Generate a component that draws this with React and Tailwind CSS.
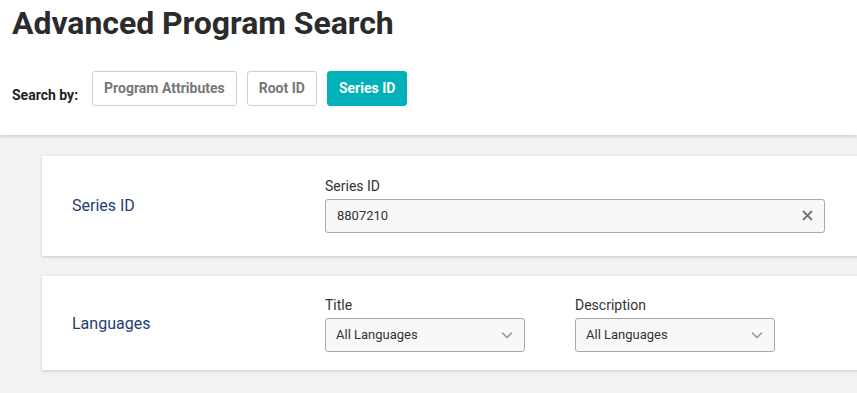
import { useState } from 'react';

const tabs = ['Program Attributes', 'Root ID', 'Series ID'];

function Chevron() {
  return (
    <svg width="14" height="14" viewBox="0 0 14 14" fill="none" stroke="#9a9a9a" strokeWidth="1.6">
      <path d="M2 4.5 L7 9.5 L12 4.5" />
    </svg>
  );
}

function LangSelect({ label }) {
  return (
    <div className="w-[200px]">
      <div className="text-[14px] leading-[16px] text-[#333] mb-[5px]">{label}</div>
      <div className="h-[34px] flex items-center justify-between pl-[10px] pr-[10px] bg-[#f8f8f8] border border-[#a8a8a8] rounded-[3px]">
        <span className="text-[13px] text-[#333]">All Languages</span>
        <Chevron />
      </div>
    </div>
  );
}

export default function App() {
  const [active, setActive] = useState('Series ID');
  const [seriesId, setSeriesId] = useState('8807210');

  return (
    <div className="w-[857px] h-[393px] overflow-hidden bg-[#f2f2f2] font-['Roboto',sans-serif]">
      <div className="bg-white h-[135px] px-[12px] pt-[3px] shadow-[0_2px_3px_rgba(0,0,0,0.12)] relative z-10">
        <h1 className="text-[32px] leading-[40px] font-bold text-[#2b2b2b] tracking-[-0.05px]">Advanced Program Search</h1>
        <div className="flex items-center mt-[28px]">
          <span className="text-[14px] font-bold text-[#222] mr-[14px] mt-[14px]">Search by:</span>
          <div className="flex gap-[10px]">
            {tabs.map((t) => (
              <button
                key={t}
                onClick={() => setActive(t)}
                className={`h-[35px] px-[11px] rounded-[3px] text-[14px] font-bold border ${
                  active === t ? 'bg-[#00b1b9] border-[#00b1b9] text-white' : 'bg-white border-[#cfcfcf] text-[#777]'
                }`}
              >
                {t}
              </button>
            ))}
          </div>
        </div>
      </div>

      <div className="pl-[42px] pt-[21px] flex flex-col gap-[20px]">
        <div className="bg-white h-[100px] w-[830px] shadow-[0_1px_3px_rgba(0,0,0,0.18)] flex items-center">
          <div className="w-[283px] pl-[30px] text-[16px] text-[#1e3e72]">Series ID</div>
          <div className="w-[500px] -mt-[2px]">
            <div className="text-[14px] leading-[16px] text-[#333] mb-[5px]">Series ID</div>
            <div className="h-[34px] flex items-center justify-between pl-[11px] pr-[11px] bg-[#f8f8f8] border border-[#a8a8a8] rounded-[3px]">
              <input
                value={seriesId}
                onChange={(e) => setSeriesId(e.target.value)}
                className="bg-transparent outline-none text-[13px] text-[#333] flex-1"
              />
              <button onClick={() => setSeriesId('')}>
                <svg width="11" height="11" viewBox="0 0 11 11" stroke="#777" strokeWidth="2">
                  <path d="M1 1 L10 10 M10 1 L1 10" />
                </svg>
              </button>
            </div>
          </div>
        </div>

        <div className="bg-white h-[94px] w-[830px] shadow-[0_1px_3px_rgba(0,0,0,0.18)] flex items-center">
          <div className="w-[283px] pl-[30px] text-[16px] text-[#1e3e72] mt-[2px]">Languages</div>
          <div className="flex gap-[50px] mt-[2px]">
            <LangSelect label="Title" />
            <LangSelect label="Description" />
          </div>
        </div>
      </div>
    </div>
  );
}
